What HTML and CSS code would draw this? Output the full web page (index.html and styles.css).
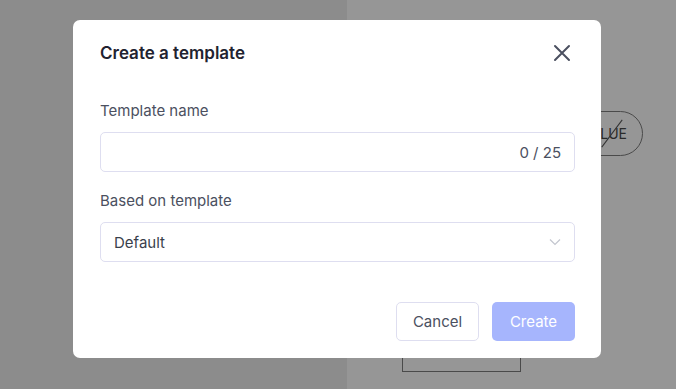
FILE: index.html
```html
<!DOCTYPE html>
<html lang="en">
<head>
<meta charset="utf-8">
<title>Create a template</title>
<link rel="stylesheet" href="styles.css">
</head>
<body>
<div class="page">
  <div class="left-panel"></div>
  <div class="right-panel">
    <div class="pill-row"><span class="pill"><span class="pill-text">VALUE</span><span class="slash"></span></span></div>
    <div class="box"></div>
  </div>
</div>
<div class="modal" role="dialog">
  <div class="modal-header">
    <h2 class="modal-title">Create a template</h2>
    <button class="close-btn" aria-label="Close">
      <svg width="18" height="18" viewBox="0 0 18 18"><path d="M2 2 L16 16 M16 2 L2 16" stroke="#4b5060" stroke-width="2" stroke-linecap="round" fill="none"/></svg>
    </button>
  </div>
  <div class="field field-first">
    <label class="field-label">Template name</label>
    <div class="input"><span class="counter">0 / 25</span></div>
  </div>
  <div class="field">
    <label class="field-label">Based on template</label>
    <div class="input select"><span class="select-value">Default</span>
      <svg width="12" height="8" viewBox="0 0 12 8"><path d="M1 1.5 L6 6.5 L11 1.5" stroke="#c3c6cf" stroke-width="1.2" fill="none"/></svg>
    </div>
  </div>
  <div class="actions">
    <button class="btn btn-cancel">Cancel</button>
    <button class="btn btn-create">Create</button>
  </div>
</div>
</body>
</html>
```
FILE: styles.css
```css
* { box-sizing: border-box; }
html, body { margin: 0; padding: 0; }
body {
  width: 676px;
  height: 389px;
  overflow: hidden;
  font-family: Inter, "Noto Sans", sans-serif;
  position: relative;
}
.page {
  display: flex;
  height: 389px;
}
.left-panel {
  width: 347px;
  background: #8c8c8c;
}
.right-panel {
  flex: 1;
  background: #969696;
  display: flex;
  flex-direction: column;
  padding-top: 111px;
}
.pill-row {
  display: flex;
  justify-content: flex-end;
  padding-right: 33px;
}
.pill {
  position: relative;
  display: inline-flex;
  align-items: center;
  height: 45px;
  padding: 0 15px 0 20px;
  border: 1px solid #4a4a4a;
  border-radius: 23px;
  font-size: 14px;
  color: #2a2a2a;
}
.slash {
  position: absolute;
  right: 13px;
  top: 21px;
  width: 34px;
  height: 1px;
  background: #333;
  transform: rotate(-53deg);
}
.box {
  margin: 140px 0 0 55px;
  width: 119px;
  height: 76px;
  border: 1px solid #4a4a4a;
  border-top: none;
}
.modal {
  position: absolute;
  left: 73px;
  top: 20px;
  width: 528px;
  height: 338px;
  background: #fff;
  border-radius: 7px;
  padding: 21px 26px 17px 27px;
  display: flex;
  flex-direction: column;
}
.modal-header {
  display: flex;
  align-items: center;
  justify-content: space-between;
  height: 24px;
}
.modal-title {
  margin: 0;
  font-size: 17px;
  font-weight: 600;
  color: #1f2330;
  line-height: 24px;
}
.close-btn {
  border: none;
  background: none;
  padding: 0;
  width: 22px;
  height: 22px;
  display: flex;
  align-items: center;
  justify-content: center;
  margin-right: 2px;
}
.field { display: flex; flex-direction: column; }
.field-first { margin-top: 36px; }
.field + .field { margin-top: 19px; }
.field-label {
  font-size: 15px;
  line-height: 20px;
  color: #4b5060;
  margin-bottom: 11px;
}
.input {
  height: 40px;
  border: 1px solid #dedef0;
  border-radius: 5px;
  display: flex;
  align-items: center;
  justify-content: flex-end;
  padding: 0 13px;
  font-size: 15px;
  color: #4b5060;
}
.select { justify-content: space-between; }
.select-value { color: #3a3f4c; }
.actions {
  margin-top: 40px;
  display: flex;
  justify-content: flex-end;
  gap: 13px;
}
.btn {
  width: 83px;
  height: 39px;
  border-radius: 5px;
  font-family: Inter, "Noto Sans", sans-serif;
  font-size: 15px;
}
.btn-cancel {
  background: #fff;
  border: 1px solid #dedef0;
  color: #4b5060;
}
.btn-create {
  background: #a6b5fd;
  border: none;
  color: #fff;
}
```
